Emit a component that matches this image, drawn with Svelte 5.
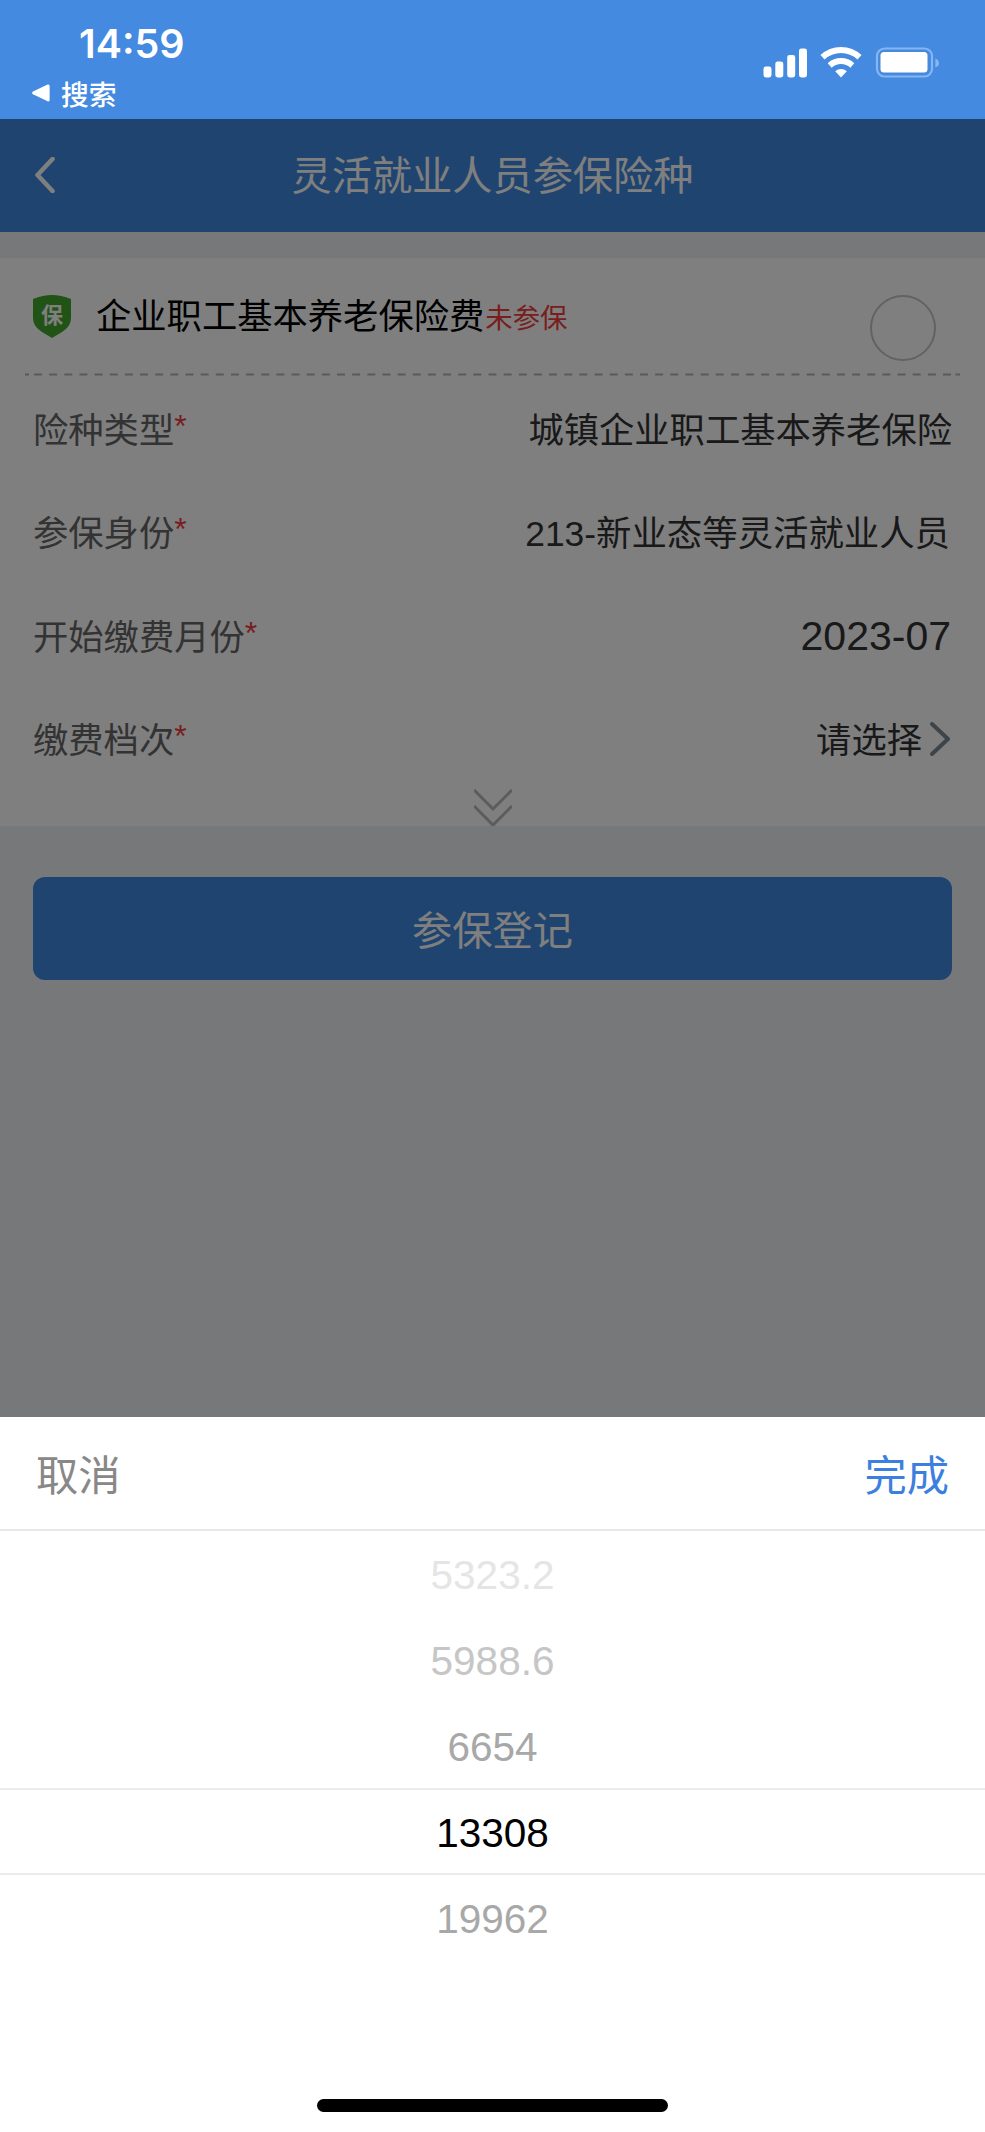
<script lang="ts">
	type Row = { label: string; value: string; kind?: string };

	const rows: Row[] = [
		{ label: '险种类型', value: '城镇企业职工基本养老保险' },
		{ label: '参保身份', value: '213-新业态等灵活就业人员', kind: 'mixed' },
		{ label: '开始缴费月份', value: '2023-07', kind: 'date' },
		{ label: '缴费档次', value: '请选择', kind: 'select' }
	];

	const options = ['5323.2', '5988.6', '6654', '13308', '19962'];

	let selected = $state(3);

	function pick(index: number) {
		selected = index;
	}
</script>

<div class="screen">
	<header class="status">
		<div class="status-left">
			<div class="time">14:59</div>
			<div class="back-app">
				<svg class="triangle" viewBox="0 0 18 18"><path d="M1 7.6 15.6.6Q17.6 0 17.6 2V16Q17.6 18 15.6 17.2L1 10.2Q-.8 9 1 7.6Z" fill="#fff" /></svg>
				<span>搜索</span>
			</div>
		</div>
		<svg class="status-icons" viewBox="0 0 178 34">
			<g fill="#fff">
				<rect x="0.5" y="20.5" width="8" height="11" rx="2.4" />
				<rect x="12.3" y="15.5" width="8" height="16" rx="2.4" />
				<rect x="24.2" y="9" width="8" height="22.5" rx="2.4" />
				<rect x="36" y="2.5" width="8" height="29" rx="2.4" />
			</g>
			<g fill="none" stroke="#fff" stroke-width="6">
				<path d="M59.5 11.3a27 27 0 0 1 37 0" />
				<path d="M66.7 19.4a17 17 0 0 1 22.6 0" />
			</g>
			<path d="M72.2 25.2a8.5 8.5 0 0 1 11.6 0L78 31.5Z" fill="#fff" />
			<rect x="114" y="2.5" width="55" height="28" rx="7.5" fill="none" stroke="#86b5f0" stroke-width="2.2" />
			<rect x="117.5" y="6" width="47" height="20.5" rx="3.5" fill="#fff" />
			<path d="M172.3 12.5q3.7 1 3.7 4.5t-3.7 4.5Z" fill="#86b5f0" />
		</svg>
	</header>

	<main class="page">
		<nav class="nav">
			<svg class="nav-back" viewBox="0 0 20 36"><path d="M17.5 2 2.5 18 17.5 34" /></svg>
			<h1>灵活就业人员参保险种</h1>
		</nav>

		<section class="card">
			<div class="card-head">
				<div class="shield">
					<svg viewBox="0 0 38 43"><path d="M0 4Q10 0 19 0T38 4V23C38 33 29 37 19 43 9 37 0 33 0 23Z" fill="#44a62c" /></svg>
					<span>保</span>
				</div>
				<h2>企业职工基本养老保险费</h2>
				<span class="state">未参保</span>
				<div class="radio"></div>
			</div>
			<svg class="dash" viewBox="0 0 935 3"><path d="M0 1.5H4M9 1.5H927M930.5 1.5H935" /></svg>

			{#each rows as row}
				<div class="row">
					<span class="label">{row.label}<i>*</i></span>
					<span class="value {row.kind ?? ''}">{row.value}</span>
					{#if row.kind === 'select'}
						<svg class="arrow" viewBox="0 0 20 34"><path d="M2 2 18 17 2 32" /></svg>
					{/if}
				</div>
			{/each}

			<svg class="more" viewBox="0 0 38 37"><path d="M0 1 19 20 38 1M0 17 19 36 38 17" /></svg>
		</section>

		<button class="submit">参保登记</button>

		<div class="mask"></div>
	</main>

	<section class="sheet">
		<div class="sheet-head">
			<button class="cancel">取消</button>
			<button class="done">完成</button>
		</div>
		<div class="picker">
			{#each options as option, i}
				<button class="option far-{Math.abs(i - selected)}" onclick={() => pick(i)}>{option}</button>
			{/each}
			<div class="picker-frame"></div>
		</div>
		<div class="home-bar"></div>
	</section>
</div>

<style>
	:global(body) {
		margin: 0;
	}

	.screen {
		display: flex;
		flex-direction: column;
		width: 985px;
		height: 2132px;
		overflow: hidden;
		font-family: 'Liberation Sans', 'Noto Sans CJK SC', sans-serif;
		background: #fff;
	}

	svg {
		display: block;
		flex: none;
	}

	h1,
	h2 {
		margin: 0;
		font-weight: 400;
	}

	button {
		border: 0;
		padding: 0;
		background: none;
		font-family: inherit;
	}

	.status {
		display: flex;
		justify-content: space-between;
		box-sizing: border-box;
		height: 119px;
		padding: 20px 46px 0 32px;
		background: #448ae0;
		color: #fff;
	}

	.time {
		padding-left: 47px;
		font: 600 39.4px/49px Inter, sans-serif;
	}

	.back-app {
		display: flex;
		align-items: center;
		gap: 11px;
		height: 48px;
		font-size: 27.8px;
		font-weight: 500;
	}

	.triangle {
		width: 18px;
		height: 18px;
	}

	.status-icons {
		width: 178px;
		height: 34px;
		margin: 26px -2px 0 0;
	}

	.page {
		position: relative;
		display: flex;
		flex-direction: column;
		height: 1298px;
		background: #eff1f4;
	}

	.nav {
		display: flex;
		align-items: center;
		box-sizing: border-box;
		height: 113px;
		padding: 0 35px;
		background: #3e88de;
		color: #fff;
	}

	.nav-back {
		width: 20px;
		height: 36px;
		margin-bottom: 2px;
	}

	.nav-back path {
		fill: none;
		stroke: #fff;
		stroke-width: 4.6;
		stroke-linecap: round;
		stroke-linejoin: round;
	}

	.nav h1 {
		flex: 1;
		padding: 2px 20px 0 0;
		text-align: center;
		font-size: 40.2px;
		line-height: 60px;
	}

	.card {
		display: flex;
		flex-direction: column;
		height: 568px;
		margin-top: 26px;
		background: #fff;
	}

	.card-head {
		display: flex;
		align-items: center;
		box-sizing: border-box;
		height: 116px;
		padding: 0 49px 0 33px;
	}

	.shield {
		display: grid;
		place-items: center;
		width: 38px;
		height: 43px;
		margin: 2px 25px 0 0;
	}

	.shield svg,
	.shield span {
		grid-area: 1 / 1;
	}

	.shield svg {
		width: 38px;
		height: 43px;
	}

	.shield span {
		color: #fff;
		font-size: 22px;
		font-weight: 700;
		line-height: 38px;
		margin-bottom: 1px;
	}

	.card-head h2 {
		padding-top: 2px;
		font-size: 35.3px;
		line-height: 50px;
		color: #000;
	}

	.state {
		padding: 7px 0 0 1px;
		font-size: 27.4px;
		line-height: 40px;
		color: #f03c3c;
	}

	.radio {
		box-sizing: border-box;
		width: 66px;
		height: 66px;
		margin: 24px 0 0 auto;
		border: 2px solid #c4c4c4;
		border-radius: 50%;
	}

	.dash {
		width: 935px;
		height: 3px;
		margin: -1px 25px 2px;
	}

	.dash path {
		fill: none;
		stroke: #b4b4b4;
		stroke-width: 2;
		stroke-dasharray: 8 7.15;
	}

	.row {
		display: flex;
		align-items: center;
		height: 103.6px;
		padding: 0 33px;
		font-size: 35.3px;
		line-height: 52px;
	}

	.label {
		display: flex;
		margin-right: auto;
		padding-top: 2px;
		color: #666;
	}

	.label i {
		margin-top: -5px;
		color: #f03c3c;
		font-style: normal;
		font-size: 32px;
	}

	.value {
		padding-top: 2px;
		color: #333;
	}

	.mixed {
		padding-right: 2px;
		font-size: 35.4px;
	}

	.date {
		padding: 0 1px 1px 0;
		font-size: 41px;
	}

	.arrow {
		width: 20px;
		height: 34px;
		margin: 0 2px 2px 8px;
	}

	.arrow path {
		fill: none;
		stroke: #7d8a94;
		stroke-width: 4;
		stroke-linecap: round;
		stroke-linejoin: round;
	}

	.more {
		width: 38px;
		height: 37px;
		margin: -3px auto 0;
	}

	.more path {
		fill: none;
		stroke: #b8b8b8;
		stroke-width: 3;
	}

	.submit {
		height: 103px;
		margin: 51px 33px 0;
		padding-bottom: 2px;
		border-radius: 12px;
		background: #3e88de;
		color: #fff;
		font-size: 40.2px;
	}

	.mask {
		position: absolute;
		inset: 0;
		background: rgba(0, 0, 0, 0.5);
	}

	.sheet {
		display: flex;
		flex-direction: column;
		flex: 1;
		background: #fff;
	}

	.sheet-head {
		display: flex;
		justify-content: space-between;
		align-items: center;
		box-sizing: border-box;
		height: 114px;
		padding: 8px 36px 0;
		border-bottom: 2px solid #e8e8e8;
	}

	.sheet-head button {
		font-size: 42.3px;
		line-height: 60px;
	}

	.cancel {
		color: #888;
	}

	.done {
		color: #3d7fdf;
	}

	.picker {
		position: relative;
		display: flex;
		flex-direction: column;
		padding-top: 2px;
	}

	.option {
		height: 85.8px;
		font-size: 40.5px;
		line-height: 85px;
		color: #a8a8a8;
	}

	.far-0 {
		color: #000;
	}

	.far-2 {
		color: #c6c6c6;
	}

	.far-3 {
		color: #e5e5e5;
	}

	.picker-frame {
		position: absolute;
		top: 257px;
		left: 0;
		right: 0;
		height: 83px;
		border: solid #ebebeb;
		border-width: 2px 0;
		pointer-events: none;
	}

	.home-bar {
		width: 351px;
		height: 13px;
		margin: auto auto 20px;
		border-radius: 7px;
		background: #000;
	}
</style>
